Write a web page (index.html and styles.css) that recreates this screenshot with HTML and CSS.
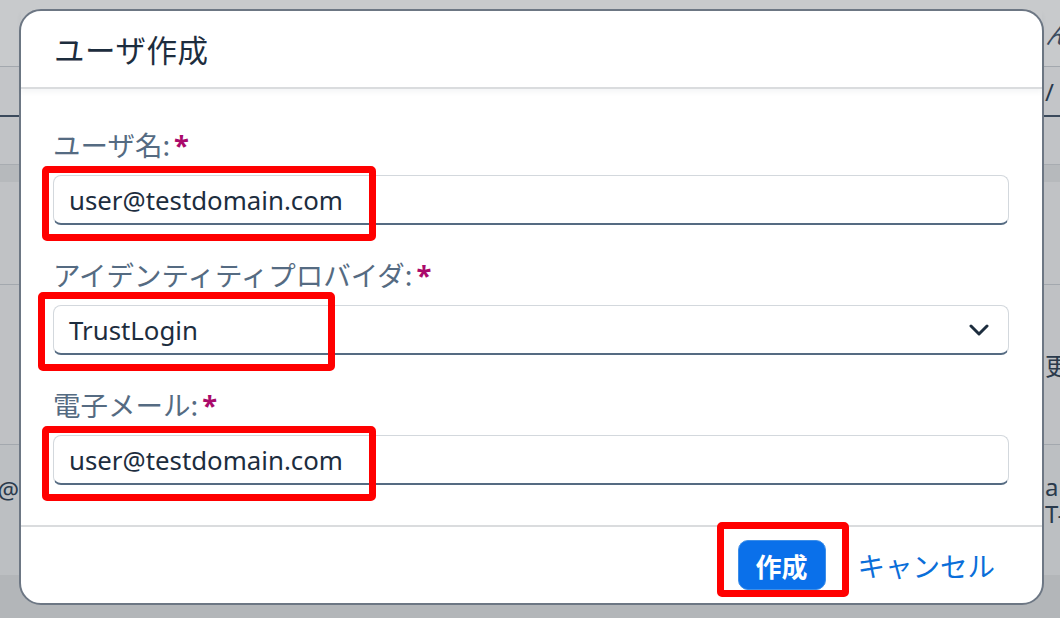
FILE: index.html
```html
<!DOCTYPE html>
<html lang="ja">
<head>
<meta charset="utf-8">
<title>ユーザ作成</title>
<link rel="stylesheet" href="styles.css">
</head>
<body>
<div class="backdrop">
  <div class="brow r1"><span class="lcell"></span><span class="rcell italic">ん</span></div>
  <div class="brow r2"><span class="lcell"></span><span class="rcell">/</span></div>
  <div class="brow r3"><span class="lcell"></span><span class="rcell"></span></div>
  <div class="brow r4"><span class="lcell"></span><span class="rcell"></span></div>
  <div class="brow r5"><span class="lcell"></span><span class="rcell">更新</span></div>
  <div class="brow r6"><span class="lcell">a@</span><span class="rcell two"><span>ar</span><span>T-</span></span></div>
  <div class="brow r7"><span class="lcell"></span><span class="rcell"></span></div>
</div>

<div class="dialog">
  <header class="dlg-head"><h1 class="dlg-title">ユーザ作成</h1></header>
  <div class="dlg-body">
    <div class="field">
      <div class="label">ユーザ名:<span class="req">*</span></div>
      <div class="control">
        <div class="input">user@testdomain.com</div>
        <div class="mark mark-1"></div>
      </div>
    </div>
    <div class="field">
      <div class="label">アイデンティティプロバイダ:<span class="req">*</span></div>
      <div class="control">
        <div class="input select">
          <span>TrustLogin</span>
          <svg class="chev" width="20" height="12" viewBox="0 0 20 12"><path d="M2 2 L10 10 L18 2" fill="none" stroke="#1d2d3e" stroke-width="3" stroke-linecap="round" stroke-linejoin="round"/></svg>
        </div>
        <div class="mark mark-2"></div>
      </div>
    </div>
    <div class="field">
      <div class="label">電子メール:<span class="req">*</span></div>
      <div class="control">
        <div class="input">user@testdomain.com</div>
        <div class="mark mark-1"></div>
      </div>
    </div>
  </div>
  <footer class="dlg-foot">
    <div class="btn-wrap">
      <button class="btn-primary">作成</button>
      <div class="mark mark-btn"></div>
    </div>
    <button class="btn-link">キャンセル</button>
  </footer>
</div>
</body>
</html>
```

FILE: styles.css
```css
* { box-sizing: border-box; }
html, body { margin: 0; padding: 0; }
body {
  width: 1060px;
  height: 618px;
  overflow: hidden;
  background: #c3c5c8;
  font-family: "Noto Sans", "Noto Sans CJK JP", sans-serif;
  position: relative;
}

/* backdrop table behind the dialog */
.backdrop { display: flex; flex-direction: column; }
.brow {
  display: flex;
  justify-content: space-between;
  align-items: center;
  color: #2a3a4c;
  font-size: 24px;
  overflow: hidden;
}
.lcell { width: 19px; display: flex; justify-content: flex-end; white-space: nowrap; overflow: hidden; }
.rcell { width: 16px; white-space: nowrap; overflow: hidden; padding-left: 1px; }
.rcell.italic { font-style: italic; color: #3b4b5e; }
.rcell.two { display: flex; flex-direction: column; line-height: 27px; font-size: 24px; }
.r1 { height: 67px; border-bottom: 1px solid #a3a8ae; background: #c8cacc; }
.r2 { height: 50px; border-bottom: 2px solid #3b4a5c; background: #c3c5c8; }
.r3 { height: 48px; border-bottom: 1px solid #a8acb1; background: #c1c3c6; }
.r4 { height: 120px; border-bottom: 1px solid #a3a8ae; background: linear-gradient(#b6b9bc 0 17px, #c0c2c5 17px); }
.r5 { height: 160px; border-bottom: 1px solid #a3a8ae; background: #bfc1c4; }
.r6 { height: 130px; background: #bcbfc2; align-items: flex-start; padding-top: 28px; }
.r7 { height: 43px; background: #b3b6b9; }

/* dialog */
.dialog {
  position: absolute;
  left: 19px;
  top: 9px;
  width: 1025px;
  height: 596px;
  background: #ffffff;
  border: 2px solid #6d7784;
  border-radius: 22px;
  display: flex;
  flex-direction: column;
}
.dlg-head {
  height: 78px;
  flex: none;
  display: flex;
  align-items: center;
  padding-left: 33px;
  border-bottom: 2px solid #dadcde;
  box-shadow: 0 3px 5px rgba(60, 80, 100, 0.06);
}
.dlg-title {
  margin: 0;
  font-family: "Noto Sans CJK JP", sans-serif;
  font-size: 30.5px;
  font-weight: 400;
  color: #1d2d3e;
  letter-spacing: 0.5px;
}
.dlg-body {
  flex: 1;
  padding: 39px 33px 40px 32px;
  display: flex;
  flex-direction: column;
  gap: 33px;
}
.field { display: flex; flex-direction: column; gap: 15px; }
.label {
  height: 32px;
  line-height: 32px;
  font-family: "Noto Sans CJK JP", sans-serif;
  font-size: 27.5px;
  color: #556b82;
  white-space: nowrap;
}
.req { color: #aa0a6b; font-weight: 700; font-family: "Noto Sans", sans-serif; margin-left: 4px; }
.control { position: relative; }
.input {
  height: 50px;
  border: 1px solid #d3d8dd;
  border-bottom: 2px solid #556b82;
  border-radius: 8px;
  padding: 0 15px;
  display: flex;
  align-items: center;
  font-size: 25.8px;
  color: #1d2d3e;
  background: #fff;
}
.select { justify-content: space-between; }
.chev { margin-right: 4px; }

/* red annotation boxes */
.mark {
  position: absolute;
  border: 7px solid #ff0000;
  border-radius: 5px;
  pointer-events: none;
}
.mark-1 { left: -11px; top: -9px; width: 334px; height: 75px; }
.mark-2 { left: -15px; top: -13px; width: 297px; height: 79px; }
.mark-btn { left: -21px; top: -18px; width: 132px; height: 75px; }

.dlg-foot {
  height: 78px;
  flex: none;
  border-top: 2px solid #dadcde;
  display: flex;
  align-items: center;
  justify-content: flex-end;
  padding-right: 47px;
  gap: 32px;
}
.btn-wrap { position: relative; display: flex; }
.btn-primary {
  width: 88px;
  height: 50px;
  border: 1px solid #3d8ee8;
  border-radius: 10px;
  background: #0a70ea;
  color: #ffffff;
  font-family: "Noto Sans CJK JP", sans-serif;
  font-size: 26px;
  font-weight: 700;
  padding: 0;
}
.btn-link {
  border: none;
  background: none;
  padding: 0;
  color: #0a6ed9;
  font-family: "Noto Sans CJK JP", sans-serif;
  font-size: 27.5px;
  font-weight: 400;
}
```
